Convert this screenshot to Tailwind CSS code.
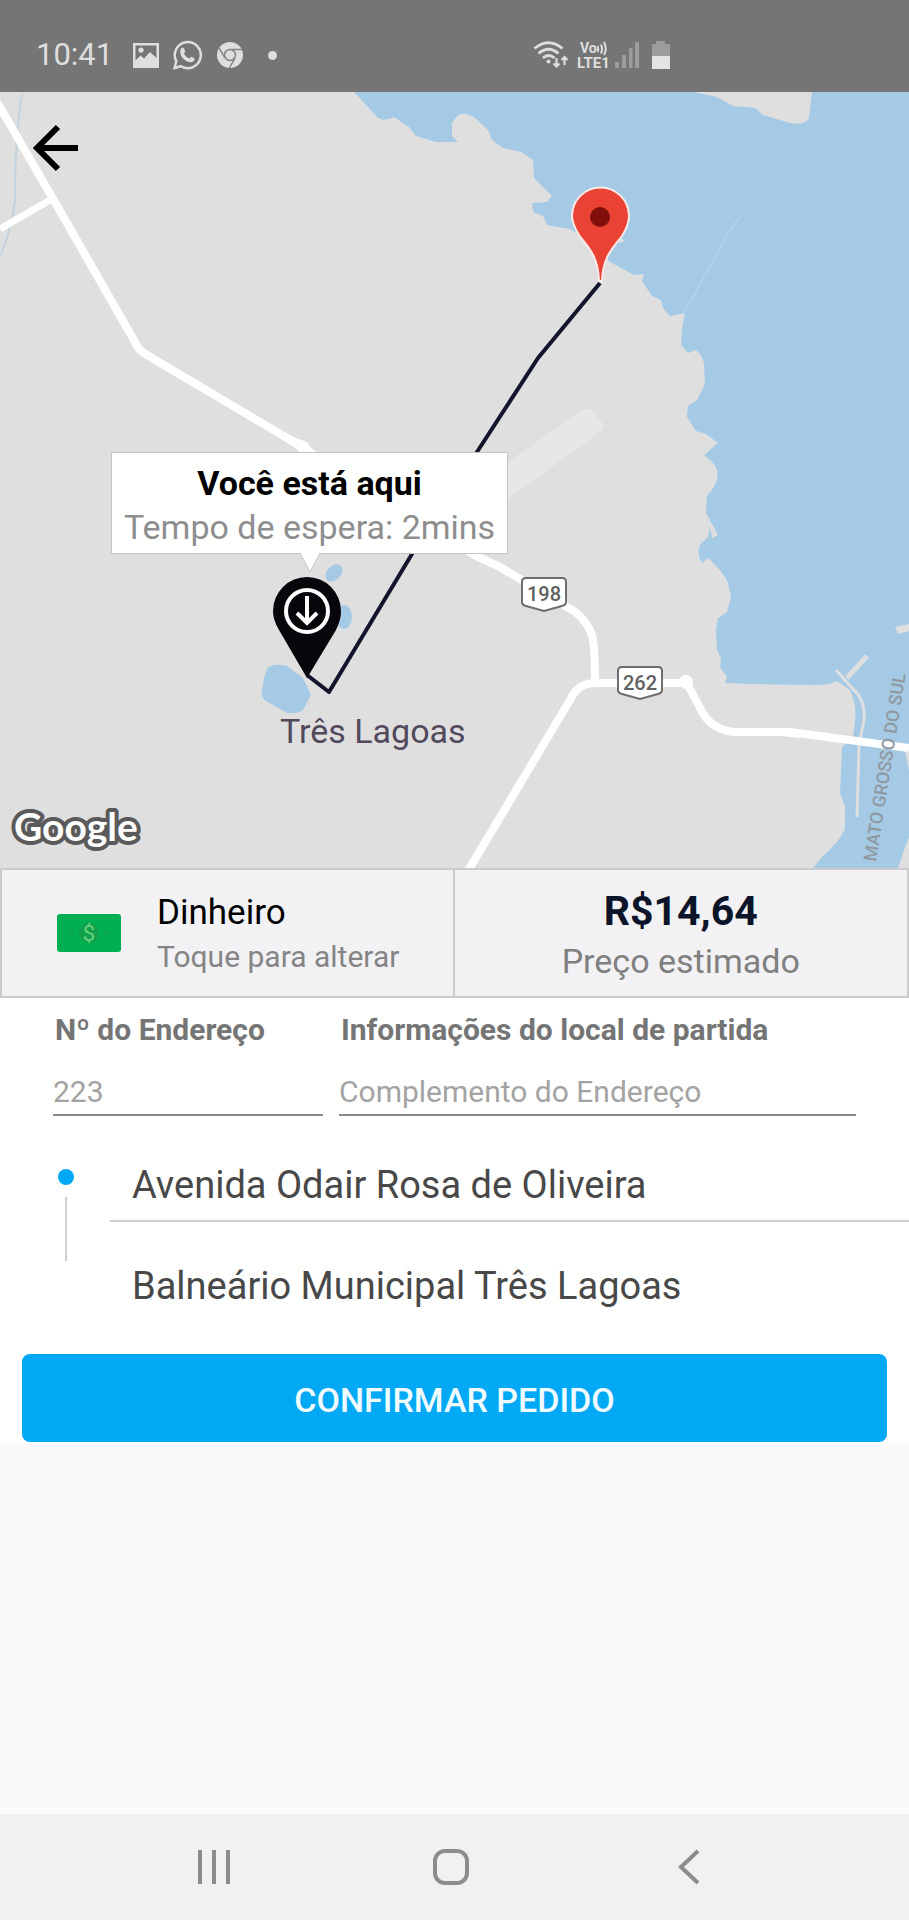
<!DOCTYPE html>
<html lang="pt-BR">
<head>
<meta charset="utf-8">
<meta name="viewport" content="width=device-width, initial-scale=1">
<title>Confirmar pedido</title>
<script src="https://cdn.jsdelivr.net/npm/@tailwindcss/browser@4"></script>
</head>
<body class="flex min-h-screen flex-col bg-[#fafafa] font-['Roboto',sans-serif]">

<!-- Status bar -->
<header class="flex h-[92px] items-center bg-[#757575] pt-[18px] pl-9 text-[#dedede]">
  <div class="flex items-center">
    <span class="w-24 text-[31px] leading-10">10:41</span>
    <svg class="h-7 w-7" viewBox="0 0 28 28" aria-hidden="true">
      <path fill="#dedede" fill-rule="evenodd" d="M1 2h26v25H1zM3.500 4.500v15l5-5 3.500 3 6-6.500 6.500 6v-12.500zM9 6.500a2.600 2.600 0 1 1 0 5.200a2.600 2.600 0 0 1 0-5.200z"/>
    </svg>
    <svg class="ml-3 h-[30px] w-[30px]" viewBox="0 0 30 30" aria-hidden="true">
      <path fill="none" stroke="#dedede" stroke-width="2.500" d="M2.500 28l1.800-6.800A13 13 0 1 1 9 26.200z"/>
      <path fill="#dedede" d="M9 8.500c1-1.500 2.600-1.200 3 0l1.200 2.800c.2.600-1.300 1.900-1.200 2.300 1.200 2.400 3 4 5.200 4.800.6 0 1.600-1.800 2.200-1.700l3 1.500c.7.600-.3 3.200-2.300 3.900-3.200.8-6.500-1-8.900-3.500C8.900 16 7.200 12 9 8.500z"/>
    </svg>
    <svg class="ml-[14px] h-7 w-7" viewBox="0 0 28 28" aria-hidden="true">
      <circle cx="14" cy="14" r="13" fill="#dedede"/>
      <circle cx="14" cy="14" r="5.500" fill="none" stroke="#858585" stroke-width="1.500"/>
      <path fill="none" stroke="#858585" stroke-width="1.500" d="M14 8.500h12M9 16.900L3 7M19 16.900L13.500 27"/>
    </svg>
    <span class="ml-6 h-[9px] w-[9px] rounded-full bg-[#dedede]"></span>
  </div>
  <div class="ml-64 flex items-center gap-2">
    <svg class="h-7 w-9" viewBox="0 0 36 28" fill="none" stroke="#dedede" aria-hidden="true">
      <path stroke-width="2.800" d="M1.500 7.500Q15.500-4 29.500 7.500M5.500 12.500Q15.500 4 25.500 12.500M10 17Q15.500 12 21.500 17"/>
      <circle cx="15.500" cy="20.500" r="2" fill="#dedede" stroke="none"/>
      <path stroke-width="2.200" d="M23.500 17v8M20.500 22.500l3 3 3-3M31.500 24v-8M28.500 19l3-3 3 3"/>
    </svg>
    <svg class="h-7 w-[34px] overflow-visible" viewBox="0 0 34 28" aria-hidden="true">
      <text x="3" y="12" font-family="Roboto,sans-serif" font-size="14" font-weight="700" fill="#dedede">Vo</text>
      <path fill="none" stroke="#dedede" stroke-width="2" d="M20.500 5q1.500 3 0 6M24 3.500q2 5 0 9M27 1q3.500 7 0 13"/>
      <text x="0" y="27" font-family="Roboto,sans-serif" font-size="15" font-weight="700" fill="#dedede">LTE1</text>
    </svg>
    <svg class="-ml-1 h-7 w-6" viewBox="0 0 24 28" fill="#9c9c9c" aria-hidden="true">
      <path d="M0 21h4v6H0zM7 14h4v13H7zM14 7h3.500v20H14zM20 1h4v26h-4z"/>
    </svg>
    <svg class="ml-1 h-7 w-5" viewBox="0 0 20 28" aria-hidden="true">
      <path fill="#9c9c9c" d="M5 0h9v3h5v13H1V3h4z"/><path fill="#e4e4e4" d="M1 15h18v13H1z"/>
    </svg>
  </div>
</header>

<main>
  <!-- Map -->
  <section class="relative" aria-label="Mapa">
    <svg class="block w-full" viewBox="0 92 909 776" font-family="Roboto,sans-serif">
      <rect y="92" width="909" height="776" fill="#dfdfdf"/>
      <!-- river and reservoir -->
      <path fill="#a5cae6" d="M354 92L369 108L378 118Q384 122 394 117L409 127L416 136L436 142L458 142L452 136L452 123Q458 112 466 114L474 117L488 130L492 140L503 148L521 152L533 160L534 178L552 196L547 202L532 203L533 212L543 216L547 225L570 229L595 245L610 262L634 275L644 274L642 281L652 296L661 300L663 308L670 316L685 313L682 329L681 345L688 353L696 350Q703 356 704 364L705 384L697 400L688 406L687 417L696 431L706 434L718 443L704 455Q714 462 717 470Q720 482 707 496L706 513L718 535L712 538L710 527L708 537L700 545Q696 554 702 563L708 558Q724 573 728 583L731 597L727 612L718 618L716 630L717 650L721 658L720 667L727 677L725 683L753 684L817 685Q830 685 837 681L850 690Q857 705 855 720L853 737L842 747L840 793L845 807L845 827Q843 838 822 857L813 868H898L903 853L909 837V92Z"/>
      <path fill="#dfdfdf" d="M693 92L717 97L733 106L755 108L763 115L790 123Q805 126 809 118L812 92ZM905 750l4-3v24zM620 238l5 3-6 2zM895 627l14-3v7l-11 3z"/>
      <g fill="none" stroke="#dfdfdf">
        <path stroke-width="5" d="M867 656L847 678"/>
        <path stroke-width="3" d="M836 670L852 688Q866 700 864 720L859 745L857 817"/>
        <path stroke="#b1d1e8" stroke-width="2" d="M684 313L729 232L740 216"/>
      </g>
      <path fill="#a5cae6" d="M268 667Q277 663 287 666L303 678L311 695L303 710Q298 714 287 713L266 701Q260 697 262 690L264 678Z"/>
      <ellipse cx="334" cy="573" rx="10" ry="7" transform="rotate(-45 334 573)" fill="#a5cae6"/>
      <ellipse cx="344" cy="617" rx="8" ry="12" fill="#a5cae6"/>
      <path fill="none" stroke="#c3d3df" stroke-width="2" d="M22 94Q15 135 15 200Q12 230 0 256"/>
      <path fill="#e7e7e7" d="M480 481L582 411Q588 407 592 410L604 425Q604 430 600 432L480 519Z"/>
      <!-- roads -->
      <g fill="none" stroke="#fff" stroke-width="8" stroke-linejoin="round">
        <path d="M-3 102L52 197L135 342Q138 350 147 355L287 438L478 557L500 567L567 607Q585 616 592 635Q595 645 595 683"/>
        <path stroke-width="7" d="M0 229L52 199"/>
        <path d="M465 876L570 700Q578 683 595 683H687L700 708Q710 730 735 732H790L909 748"/>
      </g>
      <g fill="#fff"><circle cx="686" cy="682" r="7"/><path d="M285 434l22 8 8 12h-14zM782 728l18 2v8l-18-2z"/></g>
      <!-- road shields -->
      <g fill="#fff" stroke="#6e6e6e" stroke-width="2" stroke-linejoin="round">
        <path d="M526 578h36q4 0 4 4v20q0 3-4 4l-18 5-18-5q-4-1-4-4v-20q0-4 4-4z"/>
        <path d="M622 667h36q4 0 4 4v19q0 3-4 4l-18 5-18-5q-4-1-4-4v-19q0-4 4-4z"/>
      </g>
      <g fill="#616161" font-size="20" font-weight="500" text-anchor="middle">
        <text x="544" y="601">198</text><text x="640" y="690">262</text>
      </g>
      <text transform="translate(876 862) rotate(-81)" font-size="18" font-weight="500" fill="#8f9aa3">MATO GROSSO DO SUL</text>
      <text x="280" y="743" font-size="34" fill="#51495c">Três Lagoas</text>
      <text x="14" y="841" font-family="Lato,sans-serif" font-size="39" font-weight="700" fill="#fff" stroke="#5a5a5a" stroke-width="8" stroke-linejoin="round" paint-order="stroke">Google</text>
      <!-- trip line and markers -->
      <path fill="none" stroke="#12152b" stroke-width="4" stroke-linejoin="round" d="M307 675L329 692L412 554L477 452L538 358L600 283"/>
      <path fill="#ea4335" stroke="#fbe9e7" stroke-width="2" d="M599 281C598 255 588 247 579 235C574 227 572 222 572 216A28.500 28.500 0 0 1 629 216C629 222 627 228 622 236C613 248 603 256 602 281Z"/>
      <circle cx="600" cy="217" r="10" fill="#81100c"/>
      <path fill="#08050b" d="M307 678L279 630Q273 620 273 611A34 34 0 0 1 341 611Q341 620 336 630Z"/>
      <circle cx="307" cy="611" r="21" fill="none" stroke="#fff" stroke-width="4"/>
      <path fill="none" stroke="#fff" stroke-width="4" d="M307 596v26M297 613l10 10 10-10"/>
    </svg>
    <button class="absolute top-6 left-7 p-1" aria-label="Voltar">
      <svg class="h-14 w-12" viewBox="0 0 48 56" fill="none" stroke="#000" stroke-width="6"><path d="M46 28H5M26 7L5 28L26 49"/></svg>
    </button>
    <div class="absolute top-[46.400%] left-[12.200%] flex flex-col items-center">
      <div class="border border-[#c4c4c4] bg-white px-3 pt-2 pb-1 text-center text-[34px] leading-11 whitespace-nowrap">
        <p class="font-bold text-black">Você está aqui</p>
        <p class="text-[#8e8e8e]">Tempo de espera: 2mins</p>
      </div>
      <svg class="-mt-px h-5 w-6" viewBox="0 0 24 20"><path fill="#fff" stroke="#c4c4c4" d="M2 0L12 19L22 0"/></svg>
    </div>
  </section>

  <!-- Payment and price -->
  <section class="grid grid-cols-2 divide-x-2 divide-[#cbcbce] border-2 border-[#cbcbce] bg-[#f2f2f4]">
    <button class="flex h-[126px] items-center gap-9 pl-[55px] text-left">
      <svg class="h-[38px] w-16" viewBox="0 0 64 38" aria-hidden="true">
        <rect width="64" height="38" rx="3" fill="#00b050"/>
        <circle cx="32" cy="19" r="10" fill="#12a04c"/><circle cx="15" cy="19" r="2" fill="#12a04c"/><circle cx="49" cy="19" r="2" fill="#12a04c"/>
        <text x="32" y="27" font-family="Roboto,sans-serif" font-size="22" fill="#66d27c" text-anchor="middle">$</text>
      </svg>
      <span class="flex flex-col">
        <span class="text-[35px] leading-12 text-black">Dinheiro</span>
        <span class="text-[30px] leading-10 text-[#858585]">Toque para alterar</span>
      </span>
    </button>
    <div class="flex flex-col items-center justify-center pt-2">
      <strong class="text-[41px] leading-12 font-bold text-[#0b1428]">R$14,64</strong>
      <span class="text-[34px] leading-13 text-[#808080]">Preço estimado</span>
    </div>
  </section>

  <form class="bg-white">
    <div class="flex gap-4 px-[53px] pt-2">
      <div class="flex w-[270px] flex-col">
        <label for="numero" class="pl-0.5 text-[30px] leading-12 font-bold text-[#757575]">Nº do Endereço</label>
        <input id="numero" type="text" placeholder="223" class="mt-2 h-[54px] w-full border-b-2 border-[#8a8a8a] pt-1.5 text-[30px] outline-none placeholder:text-[#a3a3a3]">
      </div>
      <div class="flex flex-1 flex-col">
        <label for="complemento" class="pl-0.5 text-[30px] leading-12 font-bold text-[#757575]">Informações do local de partida</label>
        <input id="complemento" type="text" placeholder="Complemento do Endereço" class="mt-2 h-[54px] w-full border-b-2 border-[#8a8a8a] pt-1.5 text-[30px] outline-none placeholder:text-[#a3a3a3]">
      </div>
    </div>

    <div class="mt-8 flex">
      <div class="flex w-[110px] flex-col items-center gap-3 pt-[21px] pl-[22px]">
        <span class="h-4 w-4 rounded-full bg-[#03a9f4]"></span>
        <span class="h-16 w-[2px] bg-[#cfcfcf]"></span>
      </div>
      <div class="flex-1 text-[38px] text-[#484848]">
        <p class="border-b-2 border-[#cfcfcf] pt-[11px] pb-[9px] pl-[22px] leading-13">Avenida Odair Rosa de Oliveira</p>
        <p class="pt-[38px] pb-[42px] pl-[22px] leading-13">Balneário Municipal Três Lagoas</p>
      </div>
    </div>

    <div class="px-[22px]">
      <button type="button" class="h-[88px] w-full rounded-lg bg-[#03a9f4] pt-1 text-[34px] font-medium text-[#f0fbff]">CONFIRMAR PEDIDO</button>
    </div>
  </form>
</main>

<!-- System navigation -->
<nav class="mt-auto grid h-[106px] grid-cols-3 bg-[#f1f1f1] pr-[101px] pl-[95px]">
  <button class="flex items-center justify-center" aria-label="Recentes">
    <svg class="h-9 w-9" viewBox="0 0 36 36" stroke="#8c8c8c" stroke-width="4"><path d="M4 1v34M18 1v34M32 1v34"/></svg>
  </button>
  <button class="flex items-center justify-center" aria-label="Início">
    <svg class="h-9 w-9" viewBox="0 0 36 36"><rect x="2" y="2" width="32" height="32" rx="10" fill="none" stroke="#8c8c8c" stroke-width="4"/></svg>
  </button>
  <button class="flex items-center justify-center" aria-label="Voltar ao anterior">
    <svg class="h-9 w-6" viewBox="0 0 24 36" fill="none" stroke="#8c8c8c" stroke-width="4"><path d="M21 2L4 18L21 34"/></svg>
  </button>
</nav>
</body>
</html>
